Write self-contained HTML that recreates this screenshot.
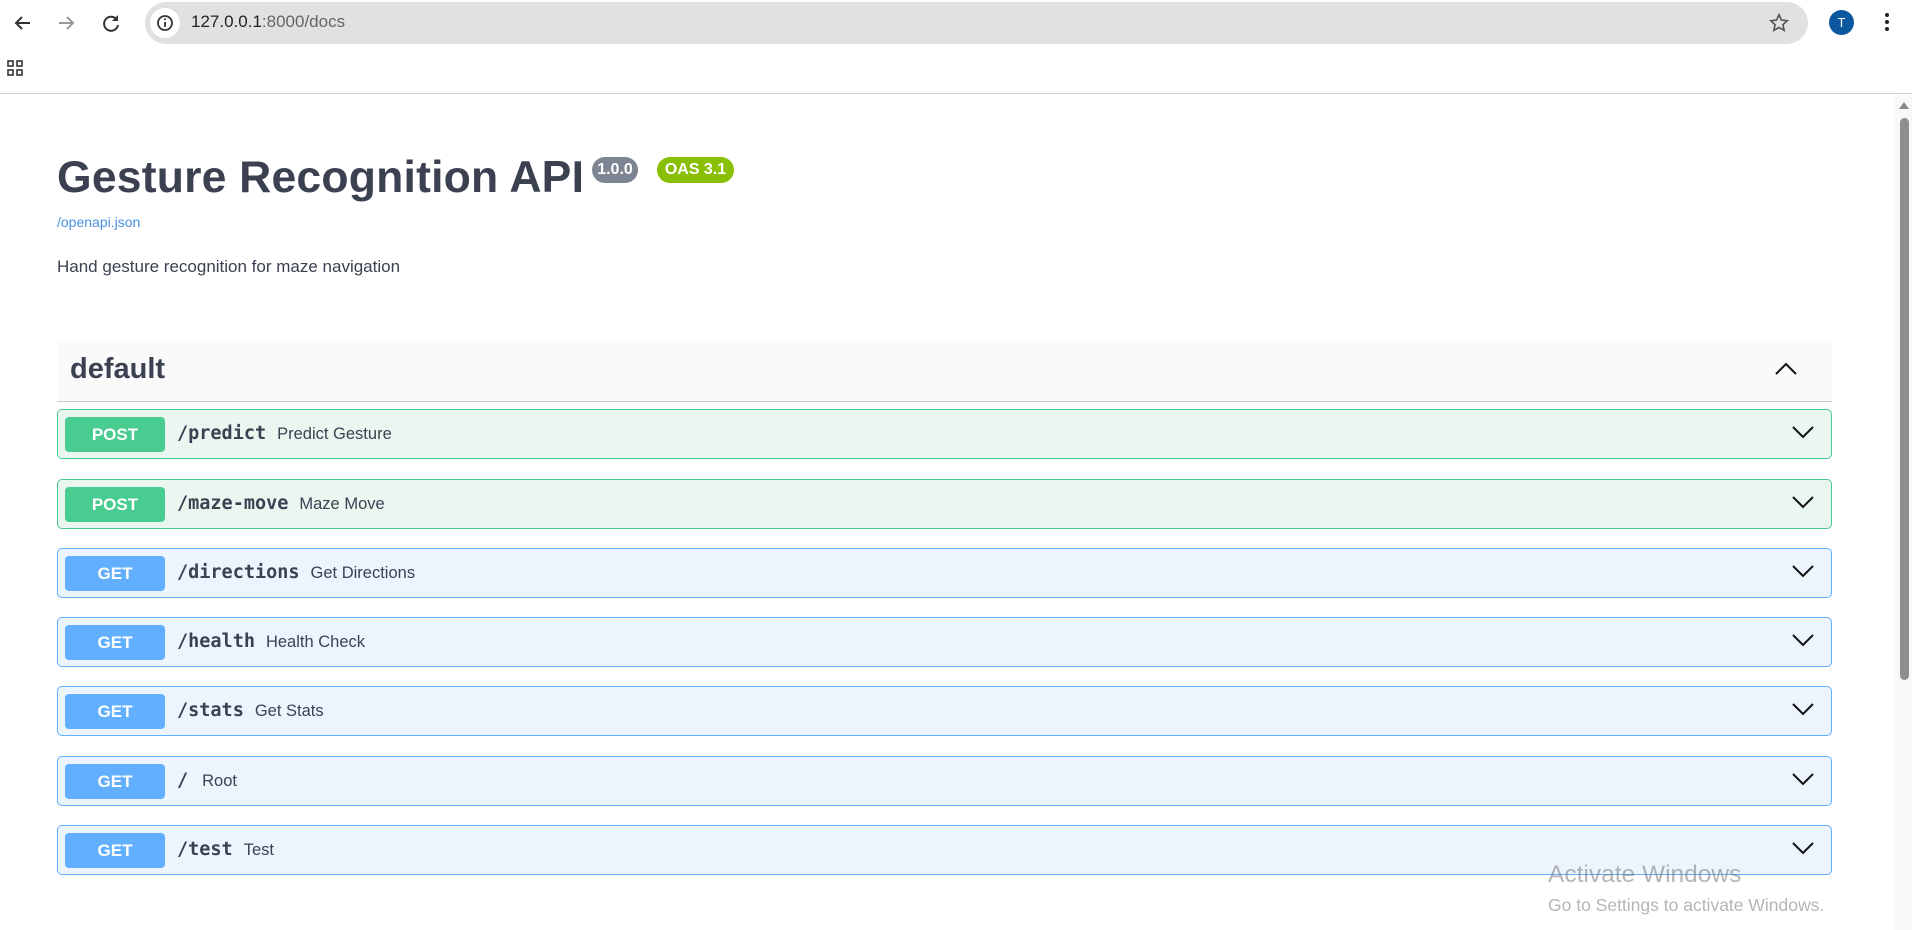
<!DOCTYPE html>
<html><head><meta charset="utf-8"><style>
*{margin:0;padding:0;box-sizing:border-box}
body{width:1912px;height:930px;overflow:hidden;background:#fff;font-family:"Liberation Sans",sans-serif;position:relative}
.abs{position:absolute}
.url{left:145px;top:2px;width:1663px;height:42px;background:#e1e1e1;border-radius:21px}
.info{left:150px;top:8px;width:30px;height:30px;border-radius:50%;background:#fff}
.op{position:absolute;left:57px;width:1775px;height:50px;border-radius:5px;border:1.5px solid}
.post{background:#e9f7f0;border-color:#49cc90}
.get{background:#ecf4fd;border-color:#61affe}
.badge{position:absolute;left:7px;top:7px;width:100px;height:35px;border-radius:4px;color:#fff;font-weight:bold;font-size:17px;text-align:center;line-height:35px}
.post .badge{background:#49cc90}.get .badge{background:#61affe}
.path{position:absolute;left:119px;top:0;line-height:47px;font-family:"DejaVu Sans Mono","Liberation Mono",monospace;font-weight:bold;font-size:18.5px;color:#3b4151;white-space:nowrap}
.path span{font-family:"Liberation Sans",sans-serif;font-weight:normal;font-size:16.5px;margin-left:11px}
.chev{position:absolute;right:16px;top:14px}
</style></head><body>
<svg class="abs" style="left:10px;top:10px" width="26" height="26" viewBox="0 0 26 26"><path d="M20 13H6M12 7l-6 6 6 6" stroke="#333" stroke-width="2" fill="none"/></svg>
<svg class="abs" style="left:53px;top:10px" width="26" height="26" viewBox="0 0 26 26"><path d="M6 13h14M14 7l6 6-6 6" stroke="#999" stroke-width="2" fill="none"/></svg>
<svg class="abs" style="left:98px;top:10px" width="26" height="26" viewBox="0 0 26 26"><path d="M19 10a7 7 0 1 0 1 5" stroke="#333" stroke-width="2" fill="none"/><path d="M20 5v6h-6z" fill="#333"/></svg>
<div class="abs url"></div>
<div class="abs info"></div>
<svg class="abs" style="left:155px;top:13px" width="20" height="20" viewBox="0 0 20 20"><circle cx="10" cy="10" r="7" stroke="#333" stroke-width="1.8" fill="none"/><path d="M10 9v5" stroke="#333" stroke-width="1.8"/><circle cx="10" cy="6.3" r="1" fill="#333"/></svg>
<div class="abs" style="left:191px;top:12px;font-size:17px;color:#222">127.0.0.1<span style="color:#666">:8000/docs</span></div>
<svg class="abs" style="left:1768px;top:12px" width="22" height="22" viewBox="0 0 24 24"><path d="M12 3l2.7 5.8 6.3.7-4.7 4.3 1.3 6.2L12 17l-5.6 3 1.3-6.2L3 9.5l6.3-.7z" stroke="#555" stroke-width="1.8" fill="none"/></svg>
<div class="abs" style="left:1829px;top:10px;width:25px;height:25px;border-radius:50%;background:#0b57a0;color:#fff;font-size:13px;text-align:center;line-height:25px">T</div>
<div class="abs" style="left:1885px;top:13px;width:4px;height:4px;border-radius:50%;background:#222;box-shadow:0 7px 0 #222,0 14px 0 #222"></div>
<svg class="abs" style="left:7px;top:60px" width="16" height="16" viewBox="0 0 16 16"><g stroke="#333" stroke-width="1.6" fill="none"><rect x="1" y="1" width="5" height="5"/><rect x="10" y="1" width="5" height="5"/><rect x="1" y="10" width="5" height="5"/><rect x="10" y="10" width="5" height="5"/></g></svg>
<div class="abs" style="left:0;top:93px;width:1912px;height:1px;background:#d0d0d0"></div>

<div class="abs" style="left:57px;top:153px;font-size:44.5px;font-weight:bold;color:#3b4151;letter-spacing:0.2px">Gesture Recognition API</div>
<div class="abs" style="left:592px;top:157px;width:46px;height:26px;border-radius:13px;background:#7d8492;color:#fff;font-weight:bold;font-size:16px;text-align:center;line-height:26px">1.0.0</div>
<div class="abs" style="left:657px;top:157px;width:77px;height:26px;border-radius:13px;background:#89bf04;color:#fff;font-weight:bold;font-size:16px;text-align:center;line-height:26px">OAS 3.1</div>
<div class="abs" style="left:57px;top:214px;font-size:14px;color:#4990e2">/openapi.json</div>
<div class="abs" style="left:57px;top:257px;font-size:17px;color:#3b4151">Hand gesture recognition for maze navigation</div>

<div class="abs" style="left:57px;top:340px;width:1775px;height:62px;background:#fafafa;border-bottom:1.5px solid #c8c8c8"></div>
<div class="abs" style="left:70px;top:353px;font-size:29px;font-weight:bold;color:#3b4151">default</div>
<svg class="abs" style="left:1774px;top:360px" width="24" height="16" viewBox="0 0 24 16"><path d="M2 14L12 4l10 10" stroke="#111" stroke-width="2" fill="none"/></svg>

<div class="op post" style="top:409px"><div class="badge">POST</div><div class="path">/predict<span>Predict Gesture</span></div><svg class="chev" width="24" height="16" viewBox="0 0 24 16"><path d="M2 3l10 10L22 3" stroke="#111" stroke-width="2" fill="none"/></svg></div>
<div class="op post" style="top:479px"><div class="badge">POST</div><div class="path">/maze-move<span>Maze Move</span></div><svg class="chev" width="24" height="16" viewBox="0 0 24 16"><path d="M2 3l10 10L22 3" stroke="#111" stroke-width="2" fill="none"/></svg></div>
<div class="op get" style="top:548px"><div class="badge">GET</div><div class="path">/directions<span>Get Directions</span></div><svg class="chev" width="24" height="16" viewBox="0 0 24 16"><path d="M2 3l10 10L22 3" stroke="#111" stroke-width="2" fill="none"/></svg></div>
<div class="op get" style="top:617px"><div class="badge">GET</div><div class="path">/health<span>Health Check</span></div><svg class="chev" width="24" height="16" viewBox="0 0 24 16"><path d="M2 3l10 10L22 3" stroke="#111" stroke-width="2" fill="none"/></svg></div>
<div class="op get" style="top:686px"><div class="badge">GET</div><div class="path">/stats<span>Get Stats</span></div><svg class="chev" width="24" height="16" viewBox="0 0 24 16"><path d="M2 3l10 10L22 3" stroke="#111" stroke-width="2" fill="none"/></svg></div>
<div class="op get" style="top:756px"><div class="badge">GET</div><div class="path">/<span style="margin-left:14px">Root</span></div><svg class="chev" width="24" height="16" viewBox="0 0 24 16"><path d="M2 3l10 10L22 3" stroke="#111" stroke-width="2" fill="none"/></svg></div>
<div class="op get" style="top:825px"><div class="badge">GET</div><div class="path">/test<span>Test</span></div><svg class="chev" width="24" height="16" viewBox="0 0 24 16"><path d="M2 3l10 10L22 3" stroke="#111" stroke-width="2" fill="none"/></svg></div>

<div class="abs" style="left:1548px;top:861px;font-size:24.5px;color:rgba(120,120,120,.55)">Activate Windows</div>
<div class="abs" style="left:1548px;top:895px;font-size:17.5px;color:rgba(120,120,120,.55)">Go to Settings to activate Windows.</div>

<div class="abs" style="left:1895px;top:95px;width:17px;height:835px;background:#f8f8f8"></div>
<svg class="abs" style="left:1898px;top:100px" width="12" height="10" viewBox="0 0 12 10"><path d="M1 9L6 2l5 7z" fill="#8a8a8a"/></svg>
<div class="abs" style="left:1900px;top:118px;width:9px;height:562px;border-radius:5px;background:#8e8e8e"></div>
</body></html>
